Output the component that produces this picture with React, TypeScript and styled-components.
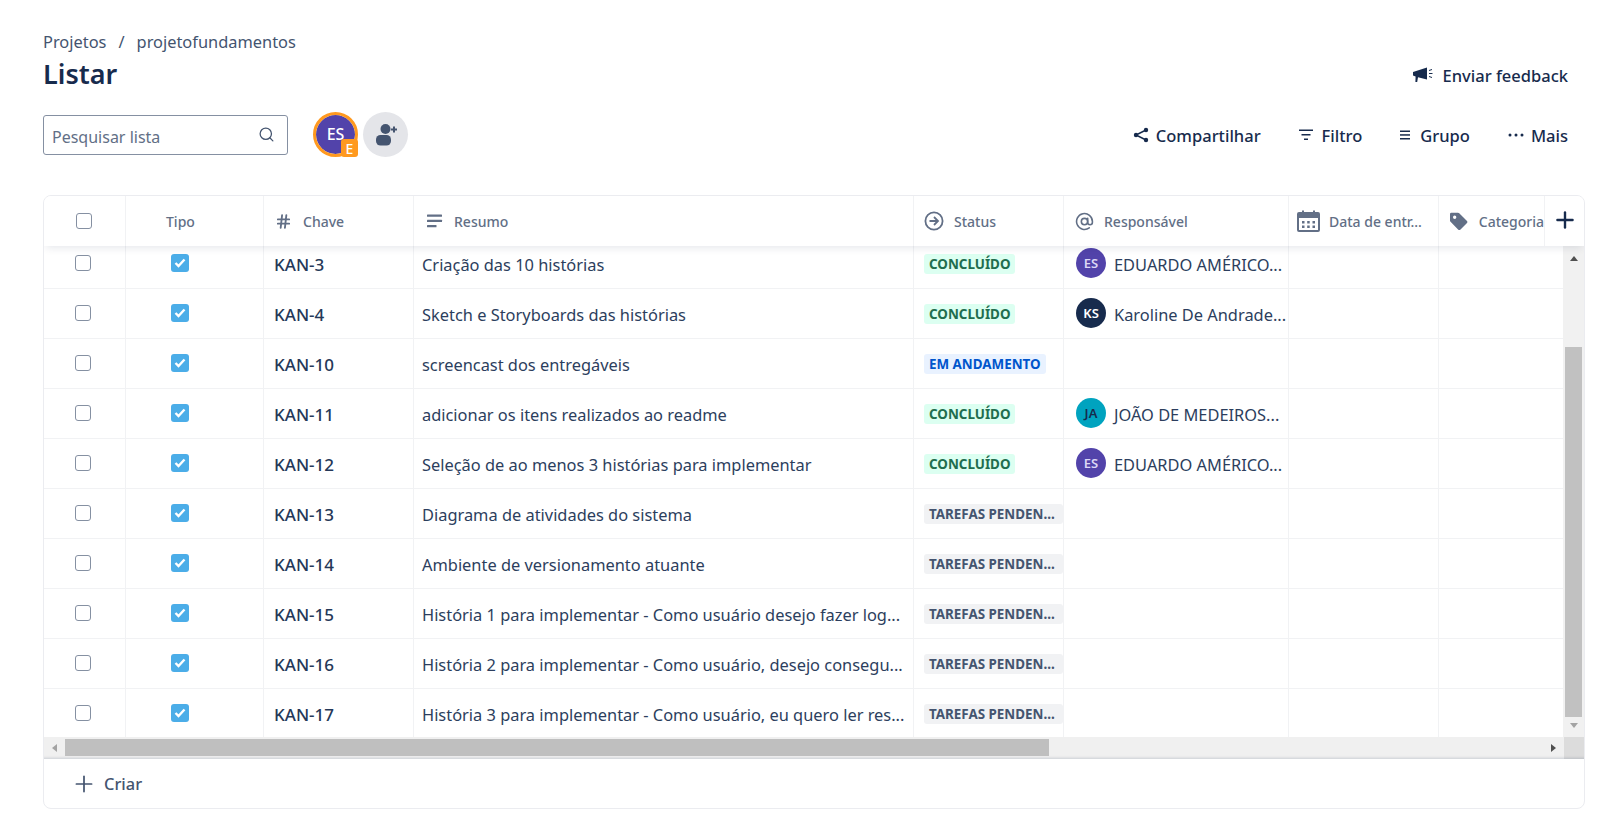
import React from 'react';
import styled, { createGlobalStyle } from 'styled-components';
import { Search, Plus, AtSign, Hash } from 'lucide-react';

type Tone = 'done' | 'progress' | 'todo';

type Issue = {
  key: string;
  summary: string;
  status: string;
  tone: Tone;
  person?: { name: string; initials: string; color: string; ink: string };
};

const eduardo = { name: 'EDUARDO AMÉRICO...', initials: 'ES', color: '#5243aa', ink: '#dcd8f5' };
const karoline = { name: 'Karoline De Andrade...', initials: 'KS', color: '#172b4d', ink: '#ffffff' };
const joao = { name: 'JOÃO DE MEDEIROS...', initials: 'JA', color: '#00a3bf', ink: '#172b4d' };

const issues: Issue[] = [
  { key: 'KAN-3', summary: 'Criação das 10 histórias', status: 'Concluído', tone: 'done', person: eduardo },
  { key: 'KAN-4', summary: 'Sketch e Storyboards das histórias', status: 'Concluído', tone: 'done', person: karoline },
  { key: 'KAN-10', summary: 'screencast dos entregáveis', status: 'Em andamento', tone: 'progress' },
  { key: 'KAN-11', summary: 'adicionar os itens realizados ao readme', status: 'Concluído', tone: 'done', person: joao },
  { key: 'KAN-12', summary: 'Seleção de ao menos 3 histórias para implementar', status: 'Concluído', tone: 'done', person: eduardo },
  { key: 'KAN-13', summary: 'Diagrama de atividades do sistema', status: 'Tarefas penden...', tone: 'todo' },
  { key: 'KAN-14', summary: 'Ambiente de versionamento atuante', status: 'Tarefas penden...', tone: 'todo' },
  { key: 'KAN-15', summary: 'História 1 para implementar - Como usuário desejo fazer log...', status: 'Tarefas penden...', tone: 'todo' },
  { key: 'KAN-16', summary: 'História 2 para implementar - Como usuário, desejo consegu...', status: 'Tarefas penden...', tone: 'todo' },
  { key: 'KAN-17', summary: 'História 3 para implementar - Como usuário, eu quero ler res...', status: 'Tarefas penden...', tone: 'todo' },
];

const toneColors: Record<Tone, { bg: string; fg: string }> = {
  done: { bg: '#dcfff1', fg: '#216e4e' },
  progress: { bg: '#e9f2ff', fg: '#0055cc' },
  todo: { bg: '#f1f2f4', fg: '#44546f' },
};

const columns = '82px 138px 150px 500px 150px 225px 150px 125px';

const MegaphoneIcon = () => (
  <svg width="21" height="16" viewBox="0 0 21 16" fill="#172b4d">
    <path d="M0 5l14-4.500v12L5 10.200 4.200 15H2.400L2.600 9.400 0 8.600z" />
    <path d="M16 3.500l3-1M16 6.500h3.500M16 9.500l3 1" stroke="#172b4d" strokeWidth="1" fill="none" />
  </svg>
);

const ShareIcon = () => (
  <svg width="16" height="16" viewBox="0 0 16 16" fill="#172b4d">
    <circle cx="13" cy="3" r="2.200" />
    <circle cx="3" cy="8" r="2.200" />
    <circle cx="13" cy="13" r="2.200" />
    <path d="M13 3L3 8l10 5" stroke="#172b4d" strokeWidth="1.500" fill="none" />
  </svg>
);

const FilterIcon = () => (
  <svg width="14" height="12" viewBox="0 0 14 12" fill="#172b4d">
    <rect x="0" y="0.500" width="14" height="1.500" />
    <rect x="2.500" y="5" width="9" height="1.500" />
    <rect x="5" y="9.500" width="4" height="1.500" />
  </svg>
);

const GroupIcon = () => (
  <svg width="10" height="10" viewBox="0 0 10 10" fill="#172b4d">
    <rect x="0" y="0.500" width="10" height="1.500" />
    <rect x="0" y="4.200" width="10" height="1.500" />
    <rect x="0" y="8" width="10" height="1.500" />
  </svg>
);

const DotsIcon = () => (
  <svg width="16" height="4" viewBox="0 0 16 4" fill="#172b4d">
    <circle cx="2" cy="2" r="1.500" />
    <circle cx="8" cy="2" r="1.500" />
    <circle cx="14" cy="2" r="1.500" />
  </svg>
);

const AddPersonIcon = () => (
  <svg width="22" height="23" viewBox="0 0 22 23" fill="#44546f">
    <circle cx="9.500" cy="6" r="5" />
    <rect x="0" y="12" width="15" height="10.500" rx="4.500" />
    <path d="M15 6.500h6M18 3.500v6" stroke="#44546f" strokeWidth="2" fill="none" />
  </svg>
);

const LinesIcon = () => (
  <svg width="16" height="14" viewBox="0 0 16 14" fill="#626f86">
    <rect x="0" y="0.500" width="15" height="2.200" rx="0.500" />
    <rect x="0" y="5.800" width="15" height="2.200" rx="0.500" />
    <rect x="0" y="11" width="9.500" height="2.200" rx="0.500" />
  </svg>
);

const StatusIcon = () => (
  <svg width="20" height="20" viewBox="0 0 20 20" fill="none" stroke="#626f86" strokeWidth="1.800">
    <circle cx="10" cy="10" r="8.600" />
    <path d="M5.500 10h8M10 6l4 4-4 4" />
  </svg>
);

const CalendarIcon = () => (
  <svg width="23" height="23" viewBox="0 0 23 23" fill="#626f86">
    <path d="M2 2h3V0.500h2V2h9V0.500h2V2h3a2 2 0 0 1 2 2v16a2 2 0 0 1-2 2H2a2 2 0 0 1-2-2V4a2 2 0 0 1 2-2zm0 6v12h19V8z" />
    <rect x="5" y="11" width="2.500" height="2.500" />
    <rect x="10.200" y="11" width="2.500" height="2.500" />
    <rect x="15.500" y="11" width="2.500" height="2.500" />
    <rect x="5" y="15.500" width="2.500" height="2.500" />
    <rect x="10.200" y="15.500" width="2.500" height="2.500" />
    <rect x="15.500" y="15.500" width="2.500" height="2.500" />
  </svg>
);

const TagIcon = () => (
  <svg width="19" height="19" viewBox="0 0 19 19" fill="#626f86">
    <path fillRule="evenodd" d="M1.500 0h7a2 2 0 0 1 1.400.600l8.300 8.300a1.500 1.500 0 0 1 0 2.100l-7.200 7.200a1.500 1.500 0 0 1-2.100 0L.6 9.900A2 2 0 0 1 0 8.500v-7A1.500 1.500 0 0 1 1.500 0zM5 3.200a1.800 1.800 0 1 0 0 3.600 1.800 1.800 0 0 0 0-3.600z" />
  </svg>
);

const CheckIcon = () => (
  <svg width="12" height="10" viewBox="0 0 12 10" fill="none" stroke="#fff" strokeWidth="2.400">
    <path d="M1.500 5l3 3 6-6.500" />
  </svg>
);

export default function App() {
  return (
    <Page>
      <GlobalStyle />
      <Breadcrumbs>
        <span>Projetos</span>
        <Slash>/</Slash>
        <span>projetofundamentos</span>
      </Breadcrumbs>
      <TitleRow>
        <Title>Listar</Title>
        <FeedbackAction $gap={9}>
          <MegaphoneIcon />
          Enviar feedback
        </FeedbackAction>
      </TitleRow>
      <Toolbar>
        <SearchBox>
          <SearchText>Pesquisar lista</SearchText>
          <Search size={17} color="#44546f" strokeWidth={1.8} />
        </SearchBox>
        <People>
          <OwnerAvatar>
            ES
            <OwnerBadge>E</OwnerBadge>
          </OwnerAvatar>
          <AddPerson>
            <AddPersonIcon />
          </AddPerson>
        </People>
        <Actions>
          <Action $gap={7}>
            <ShareIcon />
            Compartilhar
          </Action>
          <Action $gap={9}>
            <FilterIcon />
            Filtro
          </Action>
          <Action $gap={10}>
            <GroupIcon />
            Grupo
          </Action>
          <Action $gap={7}>
            <DotsIcon />
            Mais
          </Action>
        </Actions>
      </Toolbar>
      <Card>
        <HeaderRow>
          <HeaderCell $center>
            <CheckBox $shift={2} />
          </HeaderCell>
          <HeaderCell $pad={40}>Tipo</HeaderCell>
          <HeaderCell $pad={11}>
            <Hash size={17} color="#626f86" strokeWidth={2.6} />
            Chave
          </HeaderCell>
          <HeaderCell $pad={13}>
            <LinesIcon />
            Resumo
          </HeaderCell>
          <HeaderCell $pad={10} $gap={10}>
            <StatusIcon />
            Status
          </HeaderCell>
          <HeaderCell $pad={11} $gap={10}>
            <AtSign size={19} color="#626f86" strokeWidth={2} />
            Responsável
          </HeaderCell>
          <HeaderCell $pad={8} $gap={9}>
            <CalendarIcon />
            Data de entr...
          </HeaderCell>
          <HeaderCell $pad={11}>
            <TagIcon />
            Categoria
          </HeaderCell>
          <AddColumn>
            <Plus size={26} color="#172b4d" strokeWidth={2.2} />
          </AddColumn>
        </HeaderRow>
        <Body>
          <Viewport>
            <Rows>
              {issues.map((issue) => (
                <Row key={issue.key}>
                  <Cell $center>
                    <CheckBox $shift={4} $raise={2} />
                  </Cell>
                  <Cell $pad={45}>
                    <TypeBox>
                      <CheckIcon />
                    </TypeBox>
                  </Cell>
                  <Cell $pad={10}>
                    <IssueKey>{issue.key}</IssueKey>
                  </Cell>
                  <Cell $pad={8}>
                    <Summary>{issue.summary}</Summary>
                  </Cell>
                  <Cell $pad={10}>
                    <Lozenge $tone={issue.tone}>{issue.status}</Lozenge>
                  </Cell>
                  <Cell $pad={10}>
                    {issue.person && (
                      <Person>
                        <PersonAvatar $bg={issue.person.color} $ink={issue.person.ink}>
                          {issue.person.initials}
                        </PersonAvatar>
                        <PersonName>{issue.person.name}</PersonName>
                      </Person>
                    )}
                  </Cell>
                  <Cell />
                  <Cell $last />
                </Row>
              ))}
            </Rows>
          </Viewport>
          <VerticalBar>
            <ArrowUp />
            <VerticalThumb />
            <ArrowDown />
          </VerticalBar>
        </Body>
        <HorizontalBar>
          <HorizontalTrack>
            <ArrowLeft />
            <HorizontalThumb />
            <ArrowRight />
          </HorizontalTrack>
          <Corner />
        </HorizontalBar>
        <Footer>
          <Plus size={26} color="#44546f" strokeWidth={1.6} />
          Criar
        </Footer>
      </Card>
    </Page>
  );
}

const GlobalStyle = createGlobalStyle`
  html, body {
    margin: 0;
    padding: 0;
    background: #fff;
  }
  * {
    box-sizing: border-box;
  }
`;

const Page = styled.div`
  width: 1602px;
  height: 827px;
  overflow: hidden;
  padding: 29px 17px 0 43px;
  font-family: 'Noto Sans', 'Open Sans', sans-serif;
  color: #172b4d;
`;

const Breadcrumbs = styled.div`
  display: flex;
  align-items: center;
  height: 24px;
  font-size: 16.400px;
  color: #44546f;
`;

const Slash = styled.span`
  margin: 0 12px;
`;

const TitleRow = styled.div`
  display: flex;
  align-items: center;
  justify-content: space-between;
  height: 37px;
  padding-right: 17px;
`;

const Title = styled.h1`
  margin: 0;
  padding-top: 4px;
  font-size: 27px;
  font-weight: 600;
  color: #172b4d;
`;

const Action = styled.div<{ $gap: number }>`
  display: flex;
  align-items: center;
  gap: ${(p) => p.$gap}px;
  font-size: 16.500px;
  font-weight: 500;
  color: #172b4d;
`;

const FeedbackAction = styled(Action)`
  padding-top: 7px;
`;

const Toolbar = styled.div`
  display: flex;
  align-items: center;
  height: 45px;
  margin-top: 22px;
  padding-right: 17px;
`;

const SearchBox = styled.div`
  display: flex;
  align-items: center;
  justify-content: space-between;
  width: 245px;
  height: 40px;
  padding: 0 12px 0 8px;
  border: 1px solid #8590a2;
  border-radius: 3px;
`;

const SearchText = styled.span`
  padding-top: 4px;
  font-size: 16px;
  color: #626f86;
`;

const People = styled.div`
  display: flex;
  gap: 5px;
  margin-left: 25px;
`;

const OwnerAvatar = styled.div`
  position: relative;
  display: flex;
  align-items: center;
  justify-content: center;
  width: 45px;
  height: 45px;
  padding-bottom: 2px;
  border-radius: 50%;
  border: 3px solid #ff991f;
  background: #5243aa;
  background-clip: padding-box;
  color: #fff;
  font-size: 16px;
  font-weight: 500;
`;

const OwnerBadge = styled.span`
  position: absolute;
  right: -3px;
  bottom: -3px;
  display: flex;
  align-items: center;
  justify-content: center;
  width: 17px;
  height: 18px;
  border-radius: 3px;
  background: #ff991f;
  color: #fff;
  font-size: 14px;
`;

const AddPerson = styled.div`
  display: flex;
  align-items: center;
  justify-content: center;
  width: 45px;
  height: 45px;
  padding-left: 3px;
  border-radius: 50%;
  background: #e4e5e9;
`;

const Actions = styled.div`
  display: flex;
  align-items: center;
  gap: 38px;
  margin-left: auto;
  padding-top: 1px;
`;

const Card = styled.div`
  width: 1542px;
  height: 614px;
  margin-top: 38px;
  border: 1px solid #ebecf0;
  border-radius: 8px;
  overflow: hidden;
`;

const HeaderRow = styled.div`
  position: relative;
  z-index: 1;
  display: grid;
  grid-template-columns: 82px 138px 150px 500px 150px 225px 150px 106px 1fr;
  height: 50px;
  background: #fff;
  box-shadow: 0 4px 8px -2px rgba(9, 30, 66, 0.1);
`;

const HeaderCell = styled.div<{ $center?: boolean; $pad?: number; $gap?: number }>`
  display: flex;
  align-items: center;
  justify-content: ${(p) => (p.$center ? 'center' : 'flex-start')};
  gap: ${(p) => p.$gap ?? 11}px;
  padding-left: ${(p) => p.$pad ?? 0}px;
  border-right: 1px solid #f1f2f4;
  font-size: 14px;
  font-weight: 500;
  color: #626f86;
  white-space: nowrap;
  overflow: hidden;
`;

const AddColumn = styled.div`
  display: flex;
  align-items: center;
  justify-content: center;
  padding-bottom: 2px;
`;

const Body = styled.div`
  display: flex;
  height: 491px;
`;

const Viewport = styled.div`
  width: 1520px;
  overflow: hidden;
`;

const Rows = styled.div`
  margin-top: -7px;
`;

const Row = styled.div`
  display: grid;
  grid-template-columns: ${columns};
  height: 50px;
  border-bottom: 1px solid #f1f2f4;
`;

const Cell = styled.div<{ $center?: boolean; $pad?: number; $last?: boolean }>`
  display: flex;
  align-items: center;
  justify-content: ${(p) => (p.$center ? 'center' : 'flex-start')};
  min-width: 0;
  padding-left: ${(p) => p.$pad ?? 0}px;
  border-right: ${(p) => (p.$last ? 'none' : '1px solid #f1f2f4')};
`;

const CheckBox = styled.span<{ $shift: number; $raise?: number }>`
  display: block;
  width: 16px;
  height: 16px;
  margin-right: ${(p) => p.$shift}px;
  margin-bottom: ${(p) => p.$raise ?? 0}px;
  border: 1.500px solid #8590a2;
  border-radius: 3px;
  background: #fff;
`;

const TypeBox = styled.span`
  display: flex;
  align-items: center;
  justify-content: center;
  width: 18px;
  height: 18px;
  margin-bottom: 2px;
  border-radius: 3px;
  background: #4bade8;
`;

const IssueKey = styled.span`
  padding-top: 2px;
  font-size: 17px;
  font-weight: 500;
  color: #253858;
`;

const Summary = styled.span`
  padding-top: 2px;
  font-size: 16.400px;
  color: #2c3e5d;
  white-space: nowrap;
`;

const Lozenge = styled.span<{ $tone: Tone }>`
  display: block;
  flex: ${(p) => (p.$tone === 'todo' ? '1' : 'none')};
  height: 20px;
  padding: 0 5px;
  border-radius: 3px;
  font-size: 13.400px;
  font-weight: 700;
  line-height: 20px;
  text-transform: uppercase;
  white-space: nowrap;
  background: ${(p) => toneColors[p.$tone].bg};
  color: ${(p) => toneColors[p.$tone].fg};
`;

const Person = styled.div`
  display: flex;
  align-items: center;
  gap: 8px;
  min-width: 0;
  margin-bottom: 1px;
  padding-left: 2px;
`;

const PersonAvatar = styled.span<{ $bg: string; $ink: string }>`
  flex: none;
  display: flex;
  align-items: center;
  justify-content: center;
  width: 30px;
  height: 30px;
  margin-bottom: 1px;
  border-radius: 50%;
  background: ${(p) => p.$bg};
  color: ${(p) => p.$ink};
  font-size: 13px;
  font-weight: 600;
`;

const PersonName = styled.span`
  padding-top: 2px;
  font-size: 16.400px;
  color: #2c3e5d;
  white-space: nowrap;
`;

const VerticalBar = styled.div`
  display: flex;
  flex-direction: column;
  align-items: center;
  width: 21px;
  background: #f1f1f1;
`;

const VerticalThumb = styled.div`
  width: 17px;
  height: 370px;
  margin-top: 86px;
  background: #c1c1c1;
`;

const ArrowUp = styled.span`
  margin-top: 10px;
  border-left: 4.500px solid transparent;
  border-right: 4.500px solid transparent;
  border-bottom: 5px solid #505050;
`;

const ArrowDown = styled.span`
  margin-top: 6px;
  border-left: 4.500px solid transparent;
  border-right: 4.500px solid transparent;
  border-top: 5px solid #a3a3a3;
`;

const HorizontalBar = styled.div`
  display: flex;
  height: 22px;
`;

const HorizontalTrack = styled.div`
  display: flex;
  align-items: center;
  width: 1520px;
  padding-bottom: 1px;
  background: #f0f0f0;
  box-shadow: inset 0 -4px 3px -3px rgba(9, 30, 66, 0.16);
`;

const HorizontalThumb = styled.div`
  width: 984px;
  height: 17px;
  margin-left: 8px;
  background: #bfbfbf;
`;

const ArrowLeft = styled.span`
  margin-left: 8px;
  border-top: 4.500px solid transparent;
  border-bottom: 4.500px solid transparent;
  border-right: 5px solid #a3a3a3;
`;

const ArrowRight = styled.span`
  margin-left: auto;
  margin-right: 8px;
  border-top: 4.500px solid transparent;
  border-bottom: 4.500px solid transparent;
  border-left: 5px solid #505050;
`;

const Corner = styled.div`
  flex: 1;
  background: #dcdcdc;
  box-shadow: inset 0 -4px 3px -3px rgba(9, 30, 66, 0.16);
`;

const Footer = styled.div`
  display: flex;
  align-items: center;
  gap: 7px;
  height: 49px;
  padding-left: 27px;
  font-size: 16.400px;
  font-weight: 500;
  color: #44546f;
`;
